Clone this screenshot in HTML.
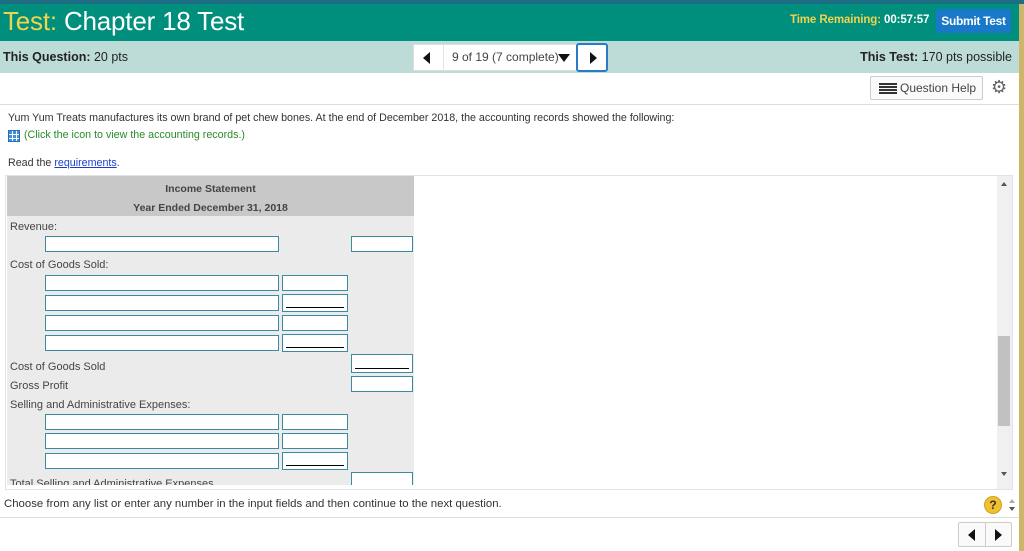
<!DOCTYPE html>
<html><head><meta charset="utf-8"><style>
*{margin:0;padding:0;box-sizing:border-box}
body{width:1024px;height:551px;overflow:hidden;background:#fff;font-family:"Liberation Sans",Arial,sans-serif;position:relative;color:#222}
.a{position:absolute}
.in{position:absolute;background:#fff;border:1px solid #3a8aa0;height:16px}
.ul::after{content:"";position:absolute;left:3px;right:3px;bottom:3px;border-bottom:1px solid #000}
.lbl{position:absolute;left:10px;font-size:11px;color:#444}
</style></head><body>
<div class="a" style="left:0;top:0;width:1024px;height:4px;background:#1d6e84"></div>
<div class="a" style="left:0;top:4px;width:1020px;height:37px;background:#008f7d"></div>
<div class="a" style="left:1019px;top:4px;width:5px;height:547px;background:#cdb56a"></div>
<div class="a" style="left:3px;top:6px;font-size:26px;color:#fff;letter-spacing:-0.2px"><span style="color:#f1d34d">Test:</span> Chapter 18 Test</div>
<div class="a" style="left:790px;top:14px;font-size:11.5px;color:#f1d34d;font-weight:bold;letter-spacing:-0.1px">Time Remaining: <span style="color:#fff">00:57:57</span></div>
<div class="a" style="left:936px;top:9px;width:75px;height:24px;background:#1a78c8;color:#fff;font-size:12px;font-weight:bold;text-align:center;line-height:24px;letter-spacing:-0.3px">Submit Test</div>
<div class="a" style="left:0;top:41px;width:1019px;height:32px;background:#bedcd7"></div>
<div class="a" style="left:3px;top:50px;font-size:12.5px"><b>This Question:</b> 20 pts</div>
<div class="a" style="right:12px;top:50px;font-size:12.5px"><b>This Test:</b> 170 pts possible</div>
<div class="a" style="left:413px;top:44px;width:194px;height:27px;background:#fff;border:1px solid #ddd"></div>
<div class="a" style="left:443px;top:44px;width:1px;height:27px;background:#e3e3e3"></div>
<div class="a" style="left:423px;top:52px;width:0;height:0;border-top:6px solid transparent;border-bottom:6px solid transparent;border-right:7px solid #111"></div>
<div class="a" style="left:452px;top:50px;font-size:12px;color:#444">9 of 19 (7 complete)</div>
<div class="a" style="left:558px;top:54px;width:0;height:0;border-left:6px solid transparent;border-right:6px solid transparent;border-top:8px solid #111"></div>
<div class="a" style="left:576px;top:43px;width:32px;height:29px;border:2px solid #2a7ac8;border-radius:3px;background:#fff"></div>
<div class="a" style="left:590px;top:52px;width:0;height:0;border-top:6px solid transparent;border-bottom:6px solid transparent;border-left:7px solid #111"></div>
<div class="a" style="left:870px;top:76px;width:113px;height:24px;border:1px solid #ccc;border-radius:2px;background:#fafafa"></div>
<div class="a" style="left:879px;top:83px;width:18px;height:11px;background:repeating-linear-gradient(#333 0 2px,transparent 2px 3px)"></div>
<div class="a" style="left:900px;top:81px;font-size:12px;color:#444">Question Help</div>
<div class="a" style="left:991px;top:77px;font-size:18px;color:#666">⚙</div>
<div class="a" style="left:0;top:104px;width:1019px;height:1px;background:#ddd"></div>
<div class="a" style="left:8px;top:112px;font-size:10.7px;color:#333">Yum Yum Treats manufactures its own brand of pet chew bones. At the end of December 2018, the accounting records showed the following:</div>
<div class="a" style="left:8px;top:130px;width:12px;height:12px;background:#3d8fd8;border:1px solid #2a6fb8;background-image:linear-gradient(90deg,transparent 3px,#fff 3px 4px,transparent 4px 7px,#fff 7px 8px,transparent 8px),linear-gradient(transparent 3px,#fff 3px 4px,transparent 4px 7px,#fff 7px 8px,transparent 8px)"></div>
<div class="a" style="left:24px;top:129px;font-size:10.7px;color:#2a8a2a">(Click the icon to view the accounting records.)</div>
<div class="a" style="left:8px;top:157px;font-size:10.7px;color:#333">Read the <span style="color:#1a3fd0;text-decoration:underline">requirements</span>.</div>
<div class="a" style="left:5px;top:175px;width:1008px;height:315px;border:1px solid #e2e2ea;background:#fff"></div>
<div class="a" style="left:7px;top:176px;width:407px;height:40px;background:#c8c8c8"></div>
<div class="a" style="left:7px;top:216px;width:407px;height:269px;background:#ebebeb;overflow:hidden"><div style="position:absolute;left:3px;top:262px;font-size:11px;color:#444">Total Selling and Administrative Expenses</div></div>
<div class="a" style="left:7px;top:180px;width:407px;text-align:center;font-size:10.5px;font-weight:bold;color:#444;line-height:19px">Income Statement<br>Year Ended December 31, 2018</div>
<div class="lbl" style="top:221px">Revenue:</div>
<div class="in" style="left:45px;top:236px;width:234px"></div>
<div class="in" style="left:351px;top:236px;width:62px"></div>
<div class="lbl" style="top:259px">Cost of Goods Sold:</div>
<div class="in" style="left:45px;top:275px;width:234px"></div><div class="in" style="left:282px;top:275px;width:66px"></div>
<div class="in" style="left:45px;top:295px;width:234px"></div><div class="in ul" style="left:282px;top:294px;width:66px;height:18px"></div>
<div class="in" style="left:45px;top:315px;width:234px"></div><div class="in" style="left:282px;top:315px;width:66px"></div>
<div class="in" style="left:45px;top:335px;width:234px"></div><div class="in ul" style="left:282px;top:334px;width:66px;height:18px"></div>
<div class="lbl" style="top:361px">Cost of Goods Sold</div>
<div class="in ul" style="left:351px;top:354px;width:62px;height:19px"></div>
<div class="lbl" style="top:380px">Gross Profit</div>
<div class="in" style="left:351px;top:376px;width:62px"></div>
<div class="lbl" style="top:399px">Selling and Administrative Expenses:</div>
<div class="in" style="left:45px;top:414px;width:234px"></div><div class="in" style="left:282px;top:414px;width:66px"></div>
<div class="in" style="left:45px;top:433px;width:234px"></div><div class="in" style="left:282px;top:433px;width:66px"></div>
<div class="in" style="left:45px;top:453px;width:234px"></div><div class="in ul" style="left:282px;top:452px;width:66px;height:18px"></div>
<div class="a" style="left:351px;top:472px;width:62px;height:13px;border:1px solid #3a8aa0;border-bottom:none;background:#fff"></div>
<div class="a" style="left:997px;top:176px;width:15px;height:313px;background:#f0f0f0"></div>
<div class="a" style="left:998px;top:336px;width:12px;height:90px;background:#c1c1c1"></div>
<div class="a" style="left:1001px;top:182px;border-left:3px solid transparent;border-right:3px solid transparent;border-bottom:4px solid #555"></div>
<div class="a" style="left:1001px;top:472px;border-left:3px solid transparent;border-right:3px solid transparent;border-top:4px solid #555"></div>
<div class="a" style="left:4px;top:498px;font-size:11.4px;color:#333">Choose from any list or enter any number in the input fields and then continue to the next question.</div>
<div class="a" style="left:984px;top:496px;width:18px;height:18px;border-radius:50%;background:#f0c030;border:1px solid #d0a020;text-align:center;font-size:12px;font-weight:bold;color:#333;line-height:16px">?</div>
<div class="a" style="left:1009px;top:499px;border-left:3px solid transparent;border-right:3px solid transparent;border-bottom:4px solid #aaa"></div>
<div class="a" style="left:1009px;top:507px;border-left:3px solid transparent;border-right:3px solid transparent;border-top:4px solid #555"></div>
<div class="a" style="left:0;top:517px;width:1019px;height:1px;background:#ddd"></div>
<div class="a" style="left:958px;top:522px;width:54px;height:25px;border:1px solid #ccc;border-radius:2px;background:#fafafa"></div>
<div class="a" style="left:985px;top:522px;width:1px;height:25px;background:#ccc"></div>
<div class="a" style="left:968px;top:529px;border-top:6px solid transparent;border-bottom:6px solid transparent;border-right:7px solid #111"></div>
<div class="a" style="left:995px;top:529px;border-top:6px solid transparent;border-bottom:6px solid transparent;border-left:7px solid #111"></div>
</body></html>
